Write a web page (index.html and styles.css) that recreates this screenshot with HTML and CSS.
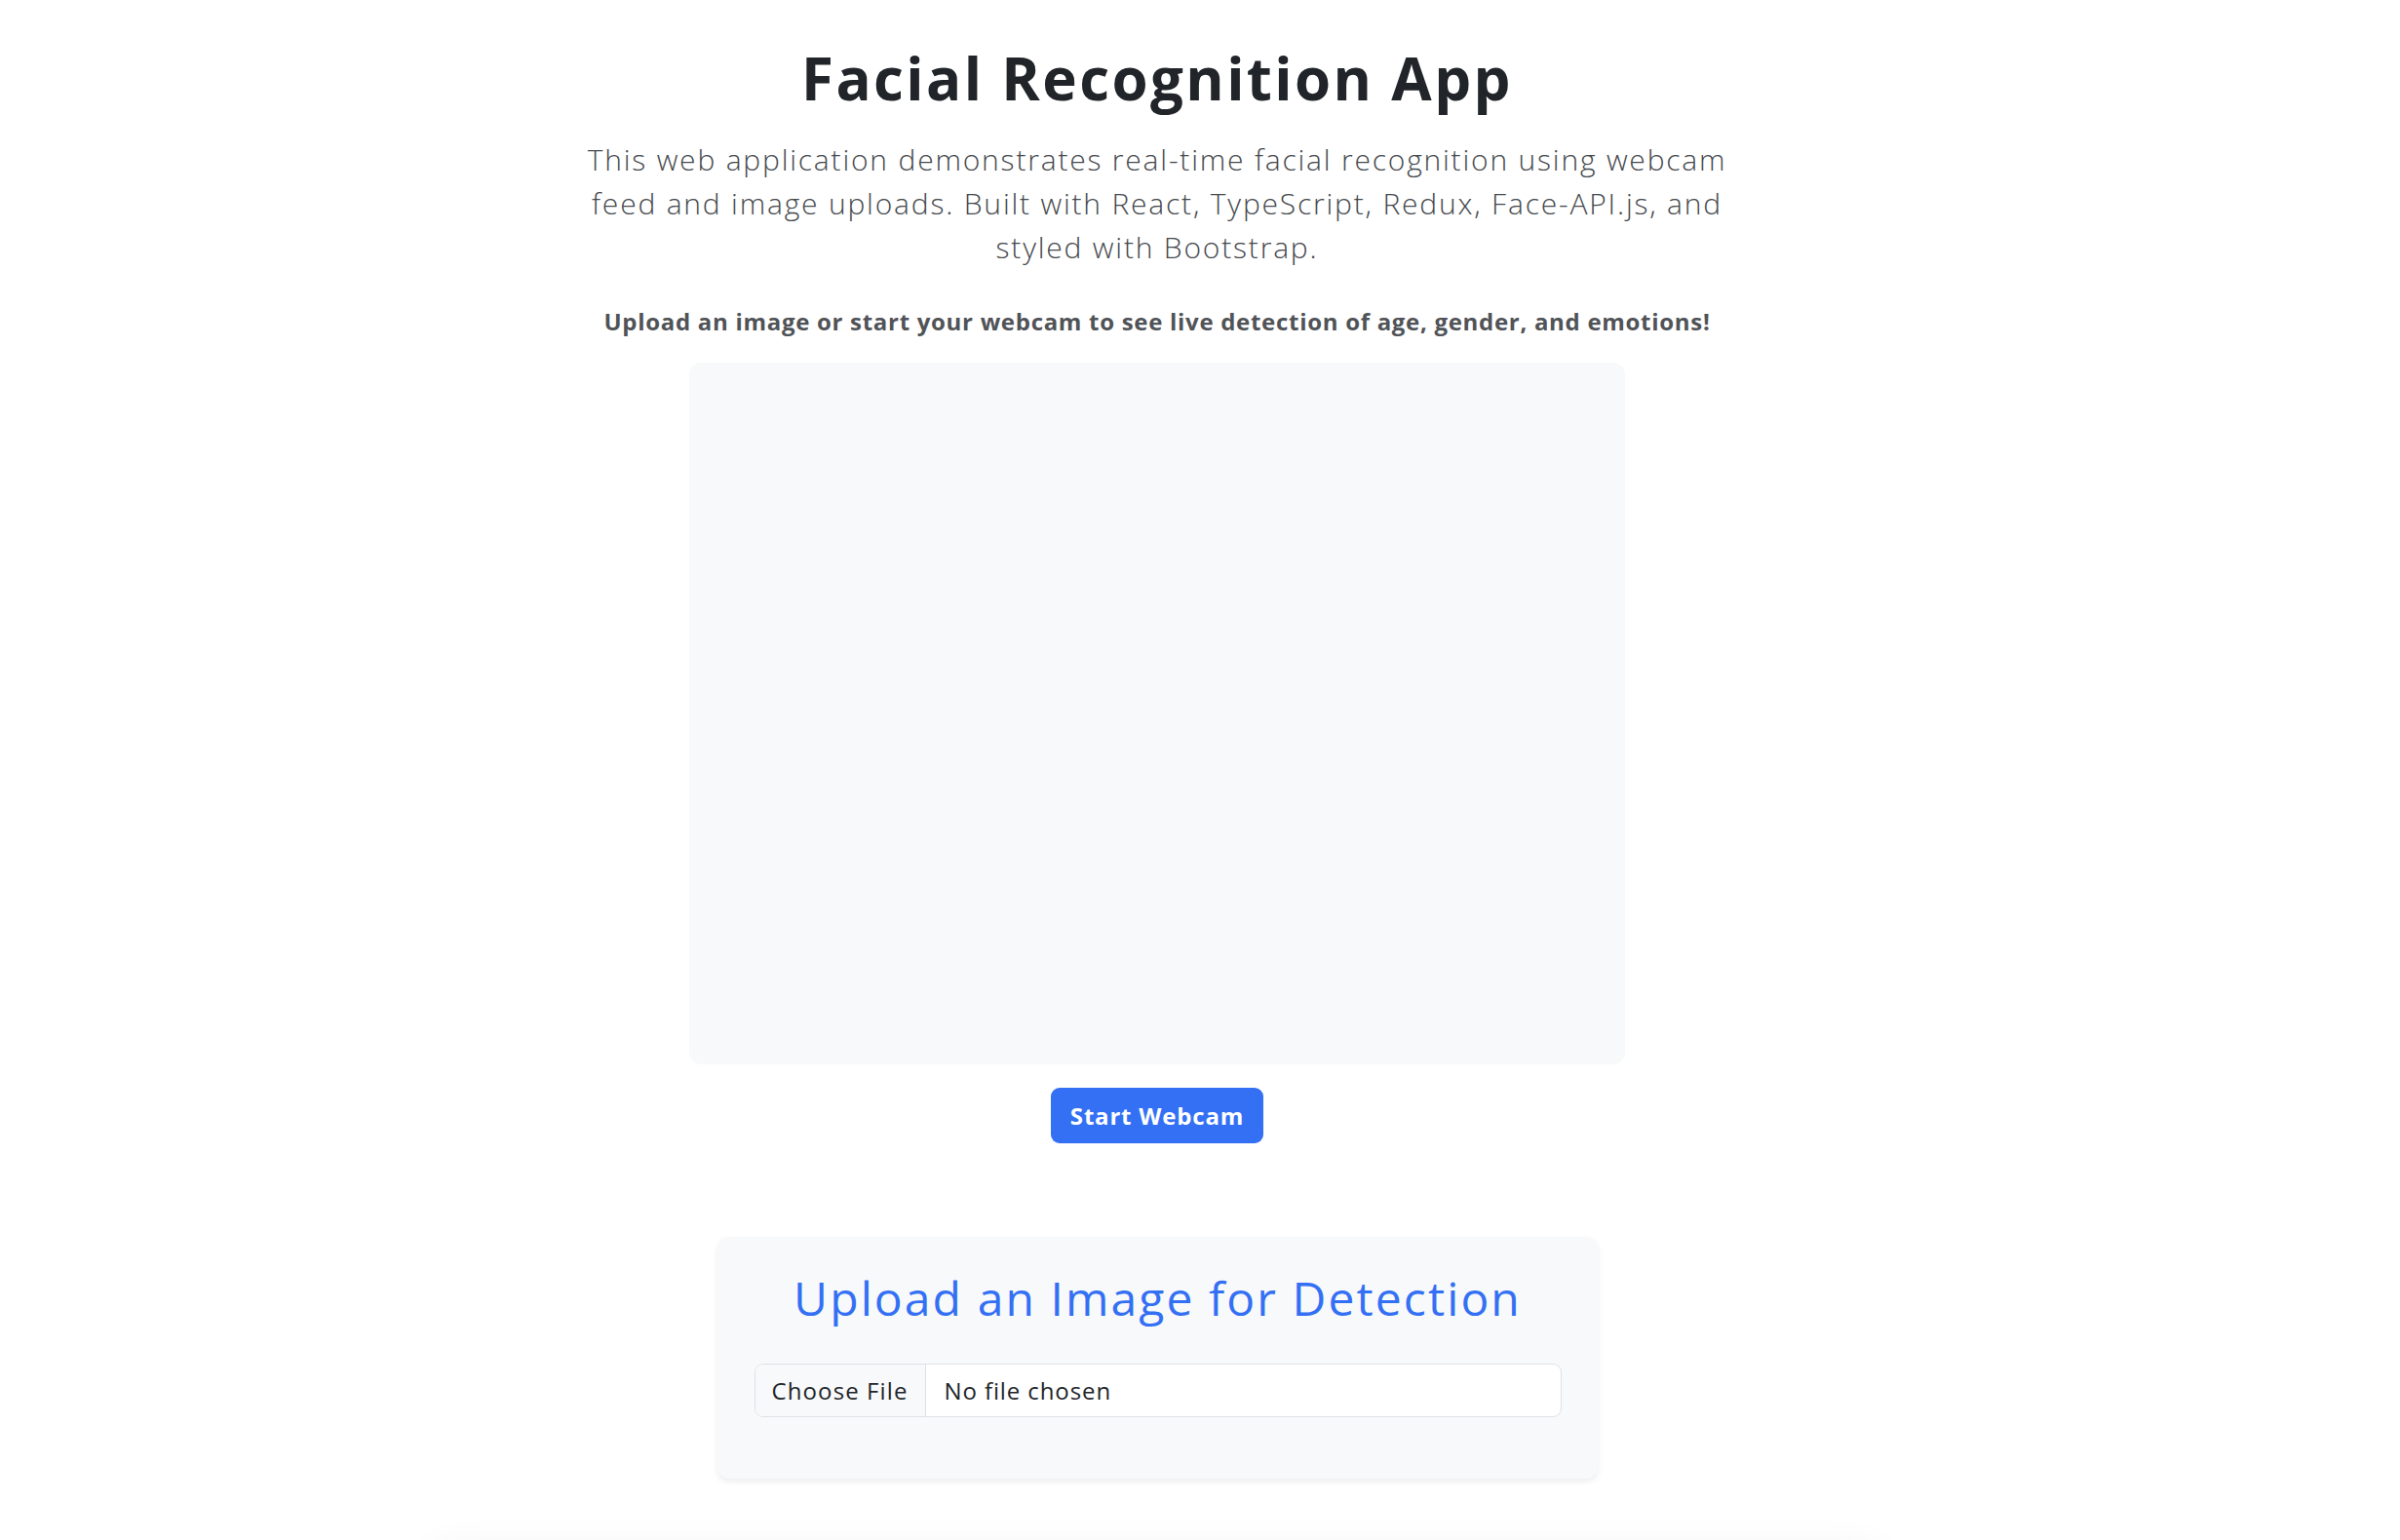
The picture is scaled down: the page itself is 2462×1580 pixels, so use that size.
FILE: index.html
```html
<!DOCTYPE html>
<html lang="en">
<head>
<meta charset="utf-8">
<title>Facial Recognition App</title>
<link rel="stylesheet" href="styles.css">
</head>
<body>
<div class="page">
  <h1 class="title">Facial Recognition App</h1>
  <p class="lead">This web application demonstrates real-time facial recognition using webcam feed and image uploads. Built with React, TypeScript, Redux, Face-API.js, and styled with Bootstrap.</p>
  <p class="hint">Upload an image or start your webcam to see live detection of age, gender, and emotions!</p>
  <div class="video-box"></div>
  <button class="btn-primary" type="button">Start Webcam</button>
  <section class="upload-card">
    <h2 class="upload-title">Upload an Image for Detection</h2>
    <label class="file-input">
      <span class="file-btn">Choose File</span>
      <span class="file-name">No file chosen</span>
    </label>
  </section>
  <div class="results-card"></div>
</div>
</body>
</html>
```
FILE: styles.css
```css
html, body {
  margin: 0;
  padding: 0;
  background: #ffffff;
}

body {
  font-family: "Open Sans", "Liberation Sans", sans-serif;
  color: #212529;
  overflow: hidden;
}

.page {
  width: 2374px;
  display: flex;
  flex-direction: column;
  align-items: center;
  text-align: center;
}

.title {
  margin: 44px 0 0;
  font-size: 60px;
  line-height: 72px;
  font-weight: 700;
  color: #212529;
  letter-spacing: 2.4px;
}

.lead {
  margin: 25px 0 0;
  width: 1200px;
  font-size: 30px;
  line-height: 45px;
  font-weight: 300;
  color: #45494d;
  letter-spacing: 1.8px;
}

.hint {
  margin: 36px 0 0;
  font-size: 24px;
  line-height: 36px;
  font-weight: 700;
  color: #505357;
  letter-spacing: 0.7px;
}

.video-box {
  margin-top: 24px;
  width: 960px;
  height: 720px;
  background: #f8f9fa;
  border-radius: 12px;
}

.btn-primary {
  margin-top: 24px;
  width: 218px;
  height: 57px;
  border: none;
  border-radius: 9px;
  background: #3370f4;
  color: #ffffff;
  font-family: inherit;
  font-size: 24px;
  font-weight: 700;
  letter-spacing: 0.8px;
  padding: 0;
}

.upload-card {
  margin-top: 96px;
  width: 903px;
  box-sizing: border-box;
  padding: 34px 37px 63px 38px;
  background: #f8f9fa;
  border-radius: 12px;
  box-shadow: 0 3px 6px rgba(0, 0, 0, 0.075);
}

.upload-title {
  margin: 0;
  font-size: 48px;
  line-height: 58px;
  font-weight: 400;
  color: #3370f4;
  letter-spacing: 2.1px;
}

.file-input {
  margin-top: 38px;
  display: flex;
  height: 55px;
  box-sizing: border-box;
  border: 1px solid #dee2e6;
  border-radius: 9px;
  background: #ffffff;
  overflow: hidden;
  text-align: left;
  font-size: 24px;
  color: #212529;
}

.file-btn {
  width: 175px;
  flex: none;
  box-sizing: border-box;
  display: flex;
  align-items: center;
  justify-content: center;
  background: #f8f9fa;
  border-right: 1px solid #dee2e6;
  letter-spacing: 1.1px;
}

.file-name {
  display: flex;
  align-items: center;
  padding-left: 19px;
  letter-spacing: 0.9px;
}

.results-card {
  margin-top: 74px;
  width: 1486px;
  height: 400px;
  flex: none;
  background: #ffffff;
  border-radius: 12px;
  box-shadow: 0 0 40px rgba(0, 0, 0, 0.06);
}
```
